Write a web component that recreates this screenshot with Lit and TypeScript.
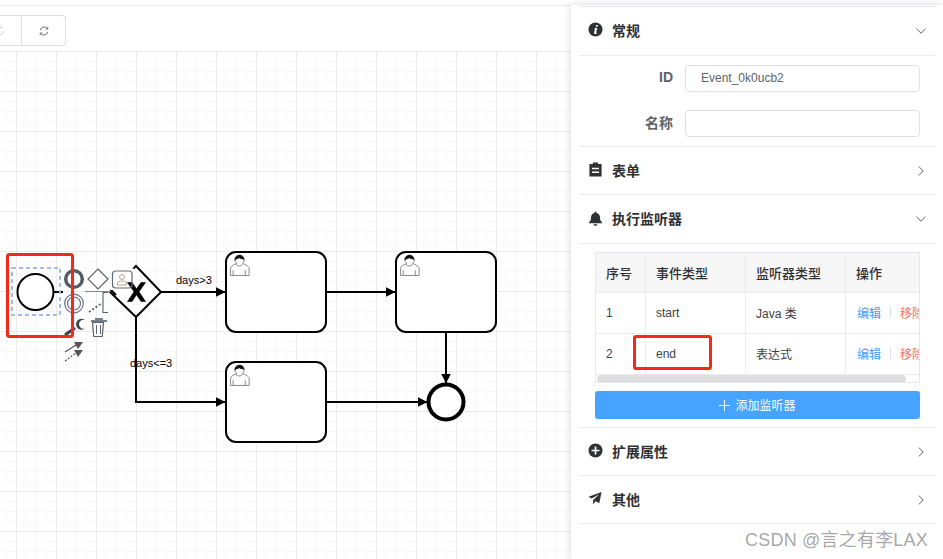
import { LitElement, html, css, svg } from "lit";
import { customElement } from "lit/decorators.js";

const userIcon = (x: number, y: number) => svg`
  <g transform="translate(${x} ${y}) scale(1.1 1.05)">
    <path d="m15 12c.9-.85 1.6-2 1.6-3.4 0-2.55-1.8-4.6-4.36-4.6-2.55 0-4.29 2.07-4.29 4.62 0 1.35.97 2.56 1.9 3.4-.53.19-5.67 2.1-5.8 4.76v6.72h17v-6.72c0-2.3-5.53-4.6-6.05-4.78z" fill="#fff" stroke="#777" stroke-width=".8"/>
    <path d="M7.9 9.500c-.2-3.500 2-5.500 4.400-5.500 2.400 0 4.400 2 4.300 5-1.500-1.700-3.300-.900-4.600-2.100-.9 1.200-3 .7-4.100 2.600z" fill="#111"/>
    <path d="M6.500 18.500v5M17.500 18.500v5" stroke="#777" stroke-width=".8" fill="none"/>
    <path d="M9 12.500c.7 2.600 5.300 2.600 6 0" stroke="#777" stroke-width=".8" fill="none"/>
  </g>`;

const task = (x: number, y: number) => svg`
  <rect x=${x} y=${y} width="100" height="80" rx="10" fill="#fff" stroke="#000" stroke-width="2"/>
  ${userIcon(x, y - 1.2)}`;

const flow = (d: string) => svg`<path d=${d} fill="none" stroke="#000" stroke-width="2" marker-end="url(#arrow)"/>`;

const rows = [
  { no: "1", event: "start", kind: "Java 类" },
  { no: "2", event: "end", kind: "表达式" },
];

const chevDown = html`<svg class="chev" viewBox="0 0 12 12"><path d="M1.500 3.800 6 8.200l4.500-4.400" fill="none" stroke="#5c6470" stroke-width="1"/></svg>`;
const chevRight = html`<svg class="chev" viewBox="0 0 12 12"><path d="M3.800 1.500 8.200 6l-4.400 4.500" fill="none" stroke="#5c6470" stroke-width="1"/></svg>`;

const icons = {
  info: html`<svg class="ico" viewBox="0 0 16 16"><circle cx="8" cy="8" r="7.500" fill="#303133"/><path d="M8.600 3.200h1.900l-.4 1.900H8.200zM7.600 6.400h2.200L8.700 11.200c-.1.400.1.500.8.300l-.2.900c-1.700.6-3.100.4-2.800-1l.8-3.700H6.700z" fill="#fff"/></svg>`,
  clip: html`<svg class="ico" viewBox="0 0 16 16"><path d="M1.500 2.200h3.700V.5h5.600v1.700h3.700V15.500h-13z" fill="#303133"/><path d="M4.200 6.200h7.600v1.500H4.200zM4.200 10.200h7.600v1.500H4.200z" fill="#fff"/></svg>`,
  bell: html`<svg class="ico" viewBox="0 0 16 16"><path d="M8 .5c.6 0 1 .4 1 1v.6c2.400.5 3.800 2.400 3.800 4.800 0 2.800.8 3.900 2.200 5.100V13H1v-1c1.400-1.200 2.200-2.300 2.200-5.100 0-2.400 1.400-4.300 3.800-4.800v-.6c0-.6.400-1 1-1zM6 14h4c0 1-.9 1.800-2 1.800S6 15 6 14z" fill="#303133"/></svg>`,
  plus: html`<svg class="ico" viewBox="0 0 16 16"><circle cx="8" cy="8" r="7.500" fill="#303133"/><path d="M7.100 3.800h1.800v3.300h3.300v1.800H8.900v3.300H7.100V8.900H3.800V7.100h3.300z" fill="#fff"/></svg>`,
  plane: html`<svg class="ico" viewBox="0 0 16 16"><path d="M14.500 1 .5 6l3.500 2L12 3.500 5.500 9.500V14.500l2.500-3.500 4 2z" fill="#303133"/></svg>`,
};

@customElement("app-root")
export class AppRoot extends LitElement {
  static styles = css`
    :host {
      display: block;
      height: 559px;
      overflow: hidden;
      background: #fff;
      font-family: "Liberation Sans", "Noto Sans CJK SC", sans-serif;
      color: #303133;
    }
    .page {
      position: relative;
      display: flex;
      height: 559px;
      box-sizing: border-box;
      padding-top: 5px;
    }
    .page::before {
      content: "";
      position: absolute;
      left: 0;
      right: 0;
      top: 5px;
      height: 1px;
      background: #e4e7ed;
    }
    .main {
      flex: 1;
      min-width: 0;
      display: flex;
      flex-direction: column;
    }
    .toolbar {
      height: 46px;
      box-sizing: border-box;
      padding-top: 10px;
      display: flex;
      margin-left: -23px;
    }
    .tool {
      width: 45px;
      height: 31px;
      box-sizing: border-box;
      border: 1px solid #dcdfe6;
      display: flex;
      align-items: center;
      justify-content: center;
      background: #fff;
    }
    .tool + .tool {
      width: 44px;
      border-left: 0;
      border-radius: 0 4px 4px 0;
    }
    .tool svg {
      width: 10px;
      height: 10px;
    }
    .canvas {
      flex: 1;
      background-color: #fff;
      background-image:
        linear-gradient(#ebebeb 1px, transparent 1px),
        linear-gradient(90deg, #ebebeb 1px, transparent 1px),
        linear-gradient(#f8f8f8 1px, transparent 1px),
        linear-gradient(90deg, #f8f8f8 1px, transparent 1px);
      background-size: 40px 40px, 40px 40px, 10px 10px, 10px 10px;
      background-position: 0 0, 16px 0, 0 0, 6px 0;
    }
    .canvas svg {
      display: block;
      width: 572px;
      height: 508px;
    }
    .canvas text {
      font: 11px "Liberation Sans", sans-serif;
      fill: #000;
    }
    .panel {
      position: relative;
      flex: none;
      width: 372px;
      box-sizing: border-box;
      padding: 1px 7px 0 8px;
      background: #fff;
      box-shadow: 0 0 8px rgba(0, 0, 0, 0.16);
      z-index: 1;
    }
    .list {
      border-top: 1px solid #e4e7ed;
    }
    .head {
      height: 48px;
      box-sizing: border-box;
      border-bottom: 1px solid #e6ebf5;
      display: flex;
      align-items: center;
      gap: 9px;
      padding: 0 9px 0 9px;
      font-size: 14px;
      font-weight: 700;
    }
    .head.tall {
      height: 49px;
    }
    .head.lift {
      padding-bottom: 1px;
    }
    .head span {
      flex: 1;
      padding-bottom: 2px;
    }
    .ico {
      width: 15px;
      height: 15px;
      margin-top: -2px;
    }
    .chev {
      width: 12px;
      height: 12px;
    }
    .form {
      height: 91px;
      box-sizing: border-box;
      border-bottom: 1px solid #e6ebf5;
      padding: 9px 16px 0 0;
      display: flex;
      flex-direction: column;
      gap: 18px;
    }
    .field {
      display: flex;
      align-items: center;
      gap: 12px;
      height: 27px;
    }
    .field label {
      width: 94px;
      text-align: right;
      font-size: 14px;
      font-weight: 700;
      color: #606266;
      padding-bottom: 3px;
    }
    .input {
      flex: 1;
      height: 27px;
      box-sizing: border-box;
      border: 1px solid #dcdfe6;
      border-radius: 4px;
      padding: 0 15px;
      font-size: 12px;
      line-height: 24px;
      color: #606266;
    }
    .listeners {
      height: 184px;
      box-sizing: border-box;
      border-bottom: 1px solid #e6ebf5;
      padding: 8px 16px 0;
    }
    .table {
      position: relative;
      width: 325px;
      height: 131px;
      box-sizing: border-box;
      border: 1px solid #e4e7ed;
      overflow: hidden;
    }
    .tr {
      display: grid;
      grid-template-columns: 50px 100px 100px 100px;
      height: 41px;
      border-bottom: 1px solid #e9ecf1;
      box-sizing: border-box;
      font-size: 12px;
    }
    .tr.th {
      height: 40px;
      background: #f7f7f8;
      font-size: 13px;
      font-weight: 500;
    }
    .tr > div {
      display: flex;
      align-items: center;
      padding-left: 10px;
      border-right: 1px solid #e9ecf1;
      white-space: nowrap;
      overflow: hidden;
      color: #3c3f45;
    }
    .tr.th > div {
      color: #303133;
    }
    .tr > div.ops {
      padding-left: 11px;
      padding-bottom: 2px;
    }
    .tr > div.kind {
      padding-bottom: 2px;
    }
    .link {
      color: #409eff;
    }
    .sep {
      width: 1px;
      height: 11px;
      background: #dcdfe6;
      margin: 0 9px;
    }
    .del {
      color: #f56c6c;
    }
    .scroll {
      height: 8px;
      margin-left: 1px;
      width: 309px;
      border-radius: 4px;
      background: #dedede;
    }
    .add {
      margin-top: 8px;
      height: 28px;
      border-radius: 3px;
      background: #46a3ff;
      color: #fff;
      font-size: 12px;
      display: flex;
      align-items: center;
      justify-content: center;
      gap: 5px;
    }
    .add span {
      padding-bottom: 2px;
    }
    .add svg {
      width: 11px;
      height: 11px;
    }
    .mark {
      position: absolute;
      right: 15px;
      bottom: 8px;
      font-size: 18px;
      line-height: 22px;
      letter-spacing: 0.2px;
      color: rgba(90, 90, 90, 0.55);
      white-space: nowrap;
    }
    .note {
      position: absolute;
      left: 62px;
      top: 330px;
      width: 79px;
      height: 35px;
      box-sizing: border-box;
      border: 3px solid #f5281c;
      border-radius: 3px;
    }
  `;

  render() {
    return html`
      <div class="page">
        <div class="main">
          <div class="toolbar">
            <div class="tool">
              <svg viewBox="0 0 12 12"><path d="M9.800 3.500A4.500 4.500 0 1 0 10.500 6" fill="none" stroke="#c0c4cc" stroke-width="1"/></svg>
            </div>
            <div class="tool">
              <svg viewBox="0 0 12 12"><path d="M1.600 5a4.500 4.500 0 0 1 8-2.200M10.400 7a4.500 4.500 0 0 1-8 2.200" fill="none" stroke="#606266" stroke-width="1.100"/><path d="M10.500 1v2.600H8M1.500 11V8.400H4" fill="none" stroke="#606266" stroke-width="1.100"/></svg>
            </div>
          </div>
          <div class="canvas">
            <svg viewBox="0 51 572 508">
              <defs>
                <marker id="arrow" viewBox="0 0 10 10" refX="9.500" refY="5" markerWidth="5" markerHeight="5" orient="auto">
                  <path d="M0 0 10 5 0 10z" fill="#000"/>
                </marker>
              </defs>
              ${flow("M161 292H225")}
              ${flow("M327 292H395")}
              ${flow("M446 333V383")}
              ${flow("M327 402H427")}
              ${flow("M136 317V402H225")}
              <path d="M54 292H63" stroke="#000" stroke-width="2" fill="none"/>
              ${task(226, 252)} ${task(396, 252)} ${task(226, 362)}
              <path d="M136 266 161 292 136 317 110 292z" fill="#fff" stroke="#000" stroke-width="2"/>
              <rect x="111" y="268.500" width="23" height="21.500" fill="#fff"/>
              <path d="M85 291.500H111" stroke="#888" stroke-width="1" fill="none"/>
              <path d="M111.500 290.500 116 295" stroke="#000" stroke-width="2"/>
              <path d="M127.500 282.500h4.500l4.500 6.300 4.500-6.300h4.500l-6.500 9.300 6.500 9.700h-4.500l-4.500-6.800-4.500 6.800h-4.500l6.500-9.700z" fill="#000" stroke="#000" stroke-width=".6"/>
              <circle cx="446" cy="402" r="17.500" fill="#fff" stroke="#000" stroke-width="4"/>
              <circle cx="35.500" cy="292" r="18" fill="#fff" stroke="#000" stroke-width="2"/>
              <rect x="12" y="268" width="48" height="47" fill="none" stroke="#9dbcf0" stroke-width="2" stroke-dasharray="4 3"/>
              <text x="176" y="284">days&gt;3</text>
              <text x="130" y="367">days&lt;=3</text>

              <circle cx="74" cy="279" r="8.300" fill="none" stroke="#555c66" stroke-width="3.500"/>
              <path d="M98 269 108 279 98 289 88 279z" fill="#fff" stroke="#59626e" stroke-width="1.200"/>
              <rect x="112.500" y="271" width="19.500" height="17" rx="3" fill="none" stroke="#606a78" stroke-width="1.200"/>
              <circle cx="122" cy="277" r="2.500" fill="none" stroke="#b69a8a" stroke-width=".9"/>
              <path d="M117.500 285v-2c0-1.500 2-2 4.500-2s4.500.5 4.500 2v2z" fill="none" stroke="#b69a8a" stroke-width=".9"/>
              <circle cx="74" cy="303.500" r="9.300" fill="none" stroke="#66707e" stroke-width="1.200"/>
              <circle cx="74" cy="303.500" r="6.500" fill="none" stroke="#66707e" stroke-width="1.200"/>
              <path d="M89 312 102 303" stroke="#4e5866" stroke-width="1.700" stroke-dasharray="2 2" fill="none"/>
              <path d="M108 292.500H103V312.500H108" stroke="#55606e" stroke-width="1.100" fill="none"/>
              <path d="M65 335 75 328" stroke="#3d4450" stroke-width="3.200"/>
              <path d="M85 320a5.500 5.500 0 1 0 0 8.500 4.500 4.500 0 1 1 0-8.500z" fill="#3d4450"/>
              <path d="M91 321h16M95 319h8" stroke="#4c5560" stroke-width="1.500" fill="none"/>
              <path d="M92.500 322.500l1.200 14h8.600l1.200-14z" fill="#fff" stroke="#5a6470" stroke-width="1.200"/>
              <path d="M96.500 325v9M100.500 325v9" stroke="#5a6470" stroke-width="1"/>
              <path d="M65 352 76 345" stroke="#555" stroke-width="1.200"/>
              <path d="M74 342 83 342 78 349z" fill="#555"/>
              <path d="M65 361 76 353" stroke="#555" stroke-width="1.200" stroke-dasharray="2 1.500"/>
              <path d="M74 350 83 350 78 357z" fill="#555"/>

              <rect x="7.500" y="254.500" width="65" height="82" rx="2" fill="none" stroke="#f5281c" stroke-width="3"/>
            </svg>
          </div>
        </div>
        <aside class="panel">
          <div class="list">
            <div class="head tall lift">${icons.info}<span>常规</span>${chevDown}</div>
            <div class="form">
              <div class="field"><label>ID</label><div class="input">Event_0k0ucb2</div></div>
              <div class="field"><label>名称</label><div class="input"></div></div>
            </div>
            <div class="head">${icons.clip}<span>表单</span>${chevRight}</div>
            <div class="head tall">${icons.bell}<span>执行监听器</span>${chevDown}</div>
            <div class="listeners">
              <div class="table">
                <div class="tr th"><div>序号</div><div>事件类型</div><div>监听器类型</div><div>操作</div></div>
                ${rows.map(
                  (r) => html`<div class="tr">
                    <div>${r.no}</div>
                    <div>${r.event}</div>
                    <div class="kind">${r.kind}</div>
                    <div class="ops"><span class="link">编辑</span><i class="sep"></i><span class="del">移除</span></div>
                  </div>`
                )}
                <div class="scroll"></div>
              </div>
              <div class="add">
                <svg viewBox="0 0 11 11"><path d="M5.500 0v11M0 5.500h11" stroke="#fff" stroke-width="1"/></svg>
                <span>添加监听器</span>
              </div>
            </div>
            <div class="head">${icons.plus}<span>扩展属性</span>${chevRight}</div>
            <div class="head">${icons.plane}<span>其他</span>${chevRight}</div>
          </div>
          <div class="note"></div>
          <div class="mark">CSDN @言之有李LAX</div>
        </aside>
      </div>
    `;
  }
}
